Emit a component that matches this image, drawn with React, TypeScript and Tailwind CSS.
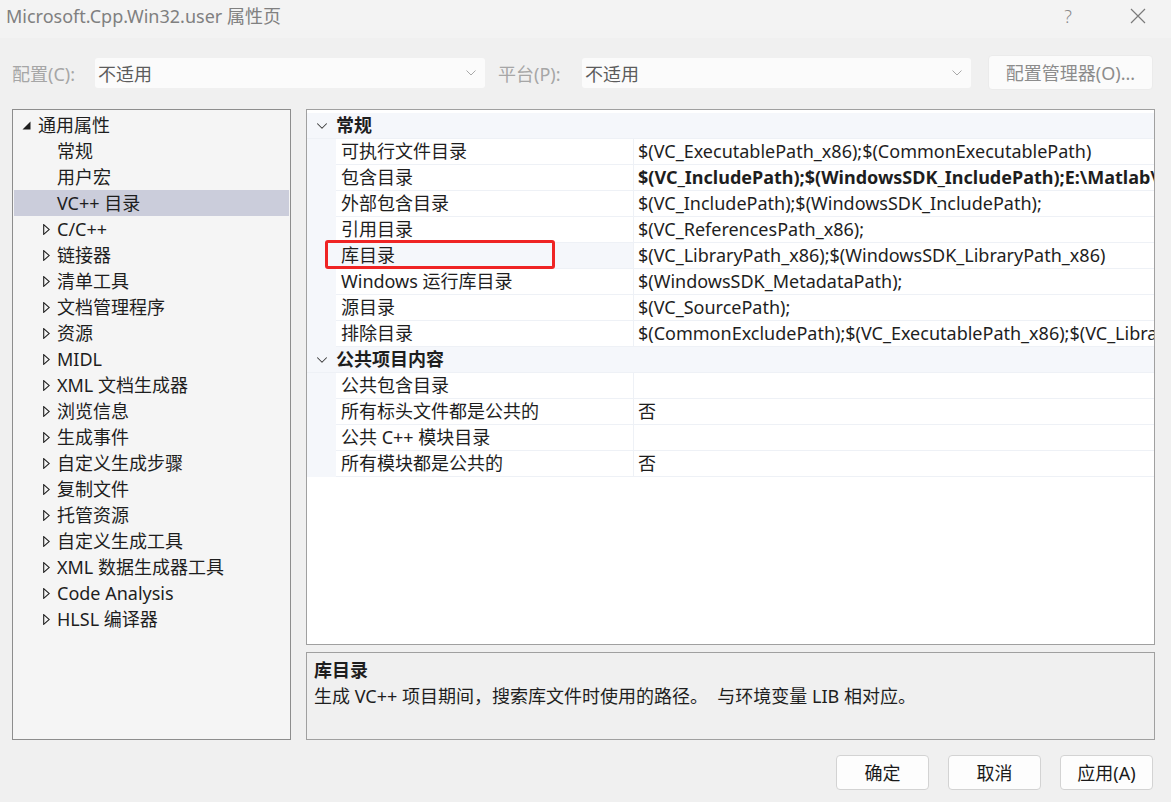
import { ChevronDown } from "lucide-react";

const FONT = "font-['Segoe_UI','Noto_Sans','Noto_Sans_CJK_SC',sans-serif]";

interface TreeItem {
  label: string;
  level: 0 | 1;
  kind: "open" | "closed" | "leaf";
  selected?: boolean;
}

const tree: TreeItem[] = [
  { label: "通用属性", level: 0, kind: "open" },
  { label: "常规", level: 1, kind: "leaf" },
  { label: "用户宏", level: 1, kind: "leaf" },
  { label: "VC++ 目录", level: 1, kind: "leaf", selected: true },
  { label: "C/C++", level: 1, kind: "closed" },
  { label: "链接器", level: 1, kind: "closed" },
  { label: "清单工具", level: 1, kind: "closed" },
  { label: "文档管理程序", level: 1, kind: "closed" },
  { label: "资源", level: 1, kind: "closed" },
  { label: "MIDL", level: 1, kind: "closed" },
  { label: "XML 文档生成器", level: 1, kind: "closed" },
  { label: "浏览信息", level: 1, kind: "closed" },
  { label: "生成事件", level: 1, kind: "closed" },
  { label: "自定义生成步骤", level: 1, kind: "closed" },
  { label: "复制文件", level: 1, kind: "closed" },
  { label: "托管资源", level: 1, kind: "closed" },
  { label: "自定义生成工具", level: 1, kind: "closed" },
  { label: "XML 数据生成器工具", level: 1, kind: "closed" },
  { label: "Code Analysis", level: 1, kind: "closed" },
  { label: "HLSL 编译器", level: 1, kind: "closed" },
];

interface Prop {
  name: string;
  value: string;
  bold?: boolean;
  hover?: boolean;
}

const sections: { title: string; rows: Prop[] }[] = [
  {
    title: "常规",
    rows: [
      { name: "可执行文件目录", value: "$(VC_ExecutablePath_x86);$(CommonExecutablePath)" },
      { name: "包含目录", value: "$(VC_IncludePath);$(WindowsSDK_IncludePath);E:\\Matlab\\extern\\include;", bold: true },
      { name: "外部包含目录", value: "$(VC_IncludePath);$(WindowsSDK_IncludePath);" },
      { name: "引用目录", value: "$(VC_ReferencesPath_x86);" },
      { name: "库目录", value: "$(VC_LibraryPath_x86);$(WindowsSDK_LibraryPath_x86)", hover: true },
      { name: "Windows 运行库目录", value: "$(WindowsSDK_MetadataPath);" },
      { name: "源目录", value: "$(VC_SourcePath);" },
      { name: "排除目录", value: "$(CommonExcludePath);$(VC_ExecutablePath_x86);$(VC_LibraryPath_x86)" },
    ],
  },
  {
    title: "公共项目内容",
    rows: [
      { name: "公共包含目录", value: "" },
      { name: "所有标头文件都是公共的", value: "否" },
      { name: "公共 C++ 模块目录", value: "" },
      { name: "所有模块都是公共的", value: "否" },
    ],
  },
];

function TreeArrow({ kind }: { kind: TreeItem["kind"] }) {
  if (kind === "open") {
    return (
      <svg width="9" height="9" viewBox="0 0 9 9" className="shrink-0">
        <path d="M8.5 0.5 L8.5 8.5 L0.5 8.5 Z" fill="#1e1e1e" />
      </svg>
    );
  }
  if (kind === "closed") {
    return (
      <svg width="7" height="11" viewBox="0 0 7 11" className="shrink-0">
        <path d="M0.7 0.7 L6.3 5.5 L0.7 10.3 Z" fill="none" stroke="#1e1e1e" strokeWidth="1.1" />
      </svg>
    );
  }
  return null;
}

function ComboBox({ width }: { width: string }) {
  return (
    <div className={`${width} h-[30px] bg-[#fbfbfb] rounded-[3px] flex items-center pl-[3px] pr-[9px] justify-between`}>
      <span className="text-[18px] text-[#5c5c5c] pt-[3px]">不适用</span>
      <svg width="10" height="6" viewBox="0 0 10 6">
        <path d="M0.5 0.5 L5 5 L9.5 0.5" fill="none" stroke="#a8a8a8" strokeWidth="1" />
      </svg>
    </div>
  );
}

function DialogButton({ label }: { label: string }) {
  return (
    <button className="w-[93px] h-[35px] bg-[#fdfdfd] border border-[#d3d3d3] rounded-[4px] text-[18px] text-[#1a1a1a] pt-[1px]">
      {label}
    </button>
  );
}

export default function App() {
  return (
    <div className={`w-[1171px] h-[802px] bg-[#f0f0f0] flex flex-col overflow-hidden ${FONT}`}>
      {/* Title bar */}
      <div className="h-[38px] bg-[#f3f3f3] flex items-center pl-[6px] shrink-0">
        <span className="text-[18px] text-[#808080] leading-none -mt-[6px]">Microsoft.Cpp.Win32.user 属性页</span>
        <div className="ml-auto flex items-center -mt-[6px]">
          <span className="text-[18px] text-[#8a8a8a] w-[20px] text-center font-light">?</span>
          <svg width="16" height="16" viewBox="0 0 16 16" className="ml-[52px] mr-[25px]">
            <path d="M1 1 L15 15 M15 1 L1 15" stroke="#7a7a7a" strokeWidth="1.2" />
          </svg>
        </div>
      </div>

      {/* Configuration row */}
      <div className="flex items-center h-[35px] mt-[17px] pl-[12px] shrink-0">
        <span className="text-[18px] text-[#a6a6a6] w-[83px] pt-[3px]">配置(C):</span>
        <ComboBox width="w-[390px]" />
        <span className="text-[18px] text-[#a6a6a6] ml-[13px] w-[84px] pt-[3px]">平台(P):</span>
        <ComboBox width="w-[389px]" />
        <button className="ml-[17px] w-[165px] h-[35px] bg-[#fbfbfb] border border-[#ebebeb] rounded-[4px] text-[18px] text-[#8c8c8c] pt-[2px]">
          配置管理器(O)...
        </button>
      </div>

      {/* Main area */}
      <div className="flex mt-[19px] h-[631px] shrink-0">
        {/* Tree */}
        <div className="ml-[12px] w-[279px] h-[631px] border border-[#8d8d8d] bg-[#f5f5f5] pt-[2px] px-[1px]">
          {tree.map((item) => (
            <div
              key={item.label}
              className={`h-[26px] flex items-center text-[18px] text-[#1e1e1e] whitespace-nowrap ${
                item.selected ? "bg-[#cbcddb]" : ""
              }`}
            >
              {item.level === 0 ? (
                <div className="flex items-center pl-[8px]">
                  <TreeArrow kind={item.kind} />
                  <span className="ml-[7px]">{item.label}</span>
                </div>
              ) : (
                <div className="flex items-center pl-[29px]">
                  <div className="w-[14px] flex items-center">
                    <TreeArrow kind={item.kind} />
                  </div>
                  <span>{item.label}</span>
                </div>
              )}
            </div>
          ))}
        </div>

        {/* Right column */}
        <div className="ml-[15px] w-[849px] flex flex-col">
          <div className="relative h-[536px] border border-[#a0a0a0] bg-white pt-[3px] overflow-hidden">
            {sections.map((section) => (
              <div key={section.title}>
                <div className="h-[26px] bg-[#f5f7fb] flex items-center border-b border-[#eef1f6]">
                  <div className="w-[29px] flex justify-center">
                    <ChevronDown size={18} strokeWidth={1.4} color="#3a3a3a" />
                  </div>
                  <span className="text-[18px] font-bold text-[#1e1e1e]">{section.title}</span>
                </div>
                {section.rows.map((row) => (
                  <div key={row.name} className="h-[26px] flex bg-[#f5f7fb]">
                    <div className="w-[29px] shrink-0" />
                    <div
                      className={`w-[298px] shrink-0 flex items-center pl-[5px] text-[18px] text-[#1e1e1e] whitespace-nowrap border-b border-r border-[#eef1f6] ${
                        row.hover ? "bg-[#f5f7fb]" : "bg-white"
                      }`}
                    >
                      {row.name}
                    </div>
                    <div
                      className={`flex-1 min-w-0 flex items-center pl-[4px] text-[18px] text-[#1e1e1e] whitespace-nowrap overflow-hidden bg-white border-b border-[#eef1f6] ${
                        row.bold ? "font-bold" : ""
                      }`}
                    >
                      {row.value}
                    </div>
                  </div>
                ))}
              </div>
            ))}

            {/* Annotation box */}
            <div className="absolute left-[18px] top-[130px] w-[230px] h-[29px] border-[3px] border-[#ef2424] rounded-[3px]" />
          </div>

          {/* Description */}
          <div className="mt-[7px] h-[88px] border border-[#a0a0a0] bg-[#f0f0f0] px-[7px] pt-[4px]">
            <div className="text-[18px] font-bold text-[#1e1e1e] leading-[26px]">库目录</div>
            <div className="text-[18px] text-[#1e1e1e] leading-[26px] whitespace-nowrap">
              生成 VC++ 项目期间，搜索库文件时使用的路径。&nbsp;&nbsp;与环境变量 LIB 相对应。
            </div>
          </div>
        </div>
      </div>

      {/* Buttons */}
      <div className="flex justify-end gap-[19px] mt-[15px] pr-[18px]">
        <DialogButton label="确定" />
        <DialogButton label="取消" />
        <DialogButton label="应用(A)" />
      </div>
    </div>
  );
}
